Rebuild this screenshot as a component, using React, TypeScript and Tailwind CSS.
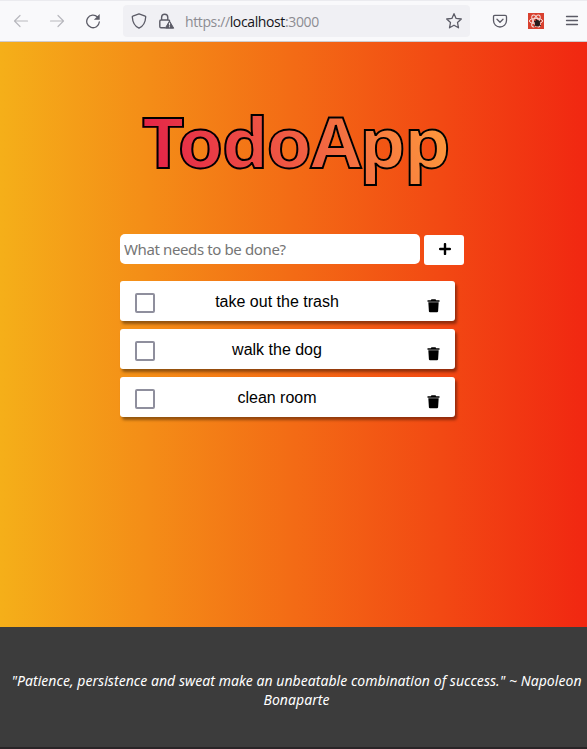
const todos = ["take out the trash", "walk the dog", "clean room"];

function BrowserBar() {
  return (
    <header className="flex h-[42px] shrink-0 items-center border-t border-b border-t-[#ebebef] border-b-[#cfcccf] bg-[#f9f9fb] text-[#5b5b66]">
      <svg className="ml-[13px] shrink-0 text-[#b9b9be]" width="16" height="16" viewBox="0 0 16 16" fill="none" stroke="currentColor" strokeWidth="1.2" strokeLinecap="round" strokeLinejoin="round">
        <path d="M14.5 8H1.5M7 2.5L1.5 8L7 13.5" />
      </svg>
      <svg className="ml-5 shrink-0 text-[#b9b9be]" width="16" height="16" viewBox="0 0 16 16" fill="none" stroke="currentColor" strokeWidth="1.2" strokeLinecap="round" strokeLinejoin="round">
        <path d="M1.5 8H14.5M9 2.5L14.5 8L9 13.5" />
      </svg>
      <svg className="ml-5 shrink-0" width="16" height="16" viewBox="0 0 16 16" fill="none" stroke="currentColor" strokeWidth="1.3" strokeLinecap="round">
        <path d="M12.5 4A6.3 6.3 0 1 0 14.3 9" />
        <path d="M14.7 1V6.8H8.9Z" fill="currentColor" stroke="none" />
      </svg>
      <div className="ml-[22px] flex h-8 w-[347px] shrink-0 items-center rounded bg-[#f0f0f4]">
        <svg className="ml-2 shrink-0" width="16" height="16" viewBox="0 0 16 16" fill="none" stroke="currentColor" strokeWidth="1.3" strokeLinejoin="round">
          <path d="M8 .8L14.2 3.2Q14.8 3.4 14.7 4C14.4 9.5 12.3 13.2 8 15.2C3.7 13.2 1.6 9.5 1.3 4Q1.2 3.4 1.8 3.2Z" />
        </svg>
        <svg className="ml-[11px] shrink-0" width="17" height="16" viewBox="0 0 17 16" fill="none" stroke="currentColor" strokeWidth="1.4">
          <path d="M3.6 7V4.4a3.1 3.1 0 0 1 6.2 0V7M7 14.7H3Q1.8 14.7 1.8 13.5V8.2Q1.8 7 3 7H10.4Q11.6 7 11.6 8" />
          <path d="M11.5 8L15.7 15.2H7.3Z" fill="currentColor" strokeWidth="1" strokeLinejoin="round" />
          <path d="M11.5 9.8V12.4M11.5 13.3V14.3" stroke="#f0f0f4" strokeWidth="1.1" />
        </svg>
        <span className="ml-[10px] w-[134px] whitespace-nowrap font-['Open_Sans',sans-serif] text-[14px] tracking-[-0.38px] text-[#8c8c92]">
          https://<span className="text-[#15141a]">localhost</span>:3000
        </span>
        <svg className="ml-[126px] shrink-0" width="18" height="18" viewBox="0 0 18 18" fill="none" stroke="currentColor" strokeWidth="1.3" strokeLinejoin="round">
          <path d="M9 1.7L11.1 6.4L16.3 7L12.5 10.5L13.5 15.8L9 13.2L4.5 15.8L5.5 10.5L1.7 7L6.9 6.4Z" />
        </svg>
      </div>
      <svg className="ml-[22px] shrink-0" width="16" height="16" viewBox="0 0 16 16" fill="none" stroke="currentColor" strokeWidth="1.3" strokeLinecap="round" strokeLinejoin="round">
        <path d="M2.8 2.4H13.2Q14.5 2.4 14.5 3.7V7.5A6.5 6.5 0 0 1 1.5 7.5V3.7Q1.5 2.4 2.8 2.4ZM5 6.3L8 9.2L11 6.3" />
      </svg>
      <svg className="ml-5 shrink-0" width="16" height="16" viewBox="0 0 16 16" fill="none">
        <path d="M0 0H16V16H0Z" fill="#d9412f" />
        <g stroke="#f4dfdc" strokeWidth="1">
          <ellipse cx="8" cy="8" rx="6.6" ry="2.7" />
          <ellipse cx="8" cy="8" rx="6.6" ry="2.7" transform="rotate(60 8 8)" />
          <ellipse cx="8" cy="8" rx="6.6" ry="2.7" transform="rotate(120 8 8)" />
        </g>
        <ellipse cx="9.4" cy="10.3" rx="2.6" ry="3.2" fill="#251b1b" />
        <path d="M6 8L13 13M13 7.5L6 13.5M8 6L9 9" stroke="#251b1b" />
      </svg>
      <svg className="ml-5 shrink-0" width="16" height="16" viewBox="0 0 16 16" stroke="currentColor" strokeWidth="1.3" strokeLinecap="round">
        <path d="M2.5 3.5H13.5M2.5 7.5H13.5M2.5 11.5H13.5" />
      </svg>
    </header>
  );
}

function TodoRow({ text }: { text: string }) {
  return (
    <li className="flex h-10 w-[335px] items-center rounded-[3px] bg-white shadow-[2px_3px_3px_rgba(0,0,0,0.4)]">
      <span className="mt-1 ml-[15px] size-5 shrink-0 rounded-[2px] border-2 border-[#8f8f9d] bg-white" />
      <span className="mt-0.5 ml-[22px] w-[200px] text-center font-['Liberation_Sans',Arial,sans-serif] text-[16px] leading-5 text-black">
        {text}
      </span>
      <svg className="mt-[9px] ml-[50px] shrink-0" width="13" height="14" viewBox="0 0 13 14">
        <path d="M.5 1.2H3.8L4.5.3H8.5L9.2 1.2H12.5V2.7H.5Z" />
        <path d="M1.3 3.2H11.7L11.1 12.2Q11 13.3 10 13.3H3Q2 13.3 1.9 12.2Z" />
      </svg>
    </li>
  );
}

export default function App() {
  return (
    <div className="flex h-[749px] w-[587px] flex-col overflow-hidden">
      <BrowserBar />
      <main className="flex h-[585px] shrink-0 flex-col bg-linear-to-r/srgb from-[#f5af19] to-[#f12711] pl-[120px]">
        <h1 className="mt-[51px] ml-[22px] h-[96px] w-[298px] origin-left scale-x-105 bg-linear-[70deg] from-[#e21c49] to-[#ffa03b] bg-clip-text font-['Noto_Sans',sans-serif] text-[70px] leading-[96px] font-bold tracking-[-1.7px] whitespace-nowrap text-transparent [-webkit-text-stroke:1.9px_black]">
          TodoApp
        </h1>
        <form className="mt-[45px] flex h-[31px] gap-1">
          <input
            className="h-[30px] w-[300px] rounded-[5px] bg-white px-1 font-['Noto_Sans',sans-serif] text-[15px] tracking-[-0.38px] placeholder:text-[#757575]"
            placeholder="What needs to be done?"
          />
          <button type="button" aria-label="Add" className="mt-px flex h-[30px] w-10 justify-center rounded-[3px] bg-white pt-2 pl-px">
            <svg width="12" height="12" viewBox="0 0 12 12" stroke="black" strokeWidth="2.4" strokeLinecap="round">
              <path d="M6 1.1V10.9M1.1 6H10.9" />
            </svg>
          </button>
        </form>
        <ul className="mt-4 flex flex-col gap-2">
          {todos.map((t) => (
            <TodoRow key={t} text={t} />
          ))}
        </ul>
      </main>
      <footer className="h-[122px] border-b-2 border-[#292527] bg-[#3c3c3c] pt-[44px] pl-[6px] text-center font-['Noto_Sans',sans-serif] text-[14px] leading-[19px] tracking-[0.05px] text-white italic">
        <p className="whitespace-nowrap">
          "Patience, persistence and sweat make an unbeatable combination of success." ~ Napoleon
          <br />
          Bonaparte
        </p>
      </footer>
    </div>
  );
}
